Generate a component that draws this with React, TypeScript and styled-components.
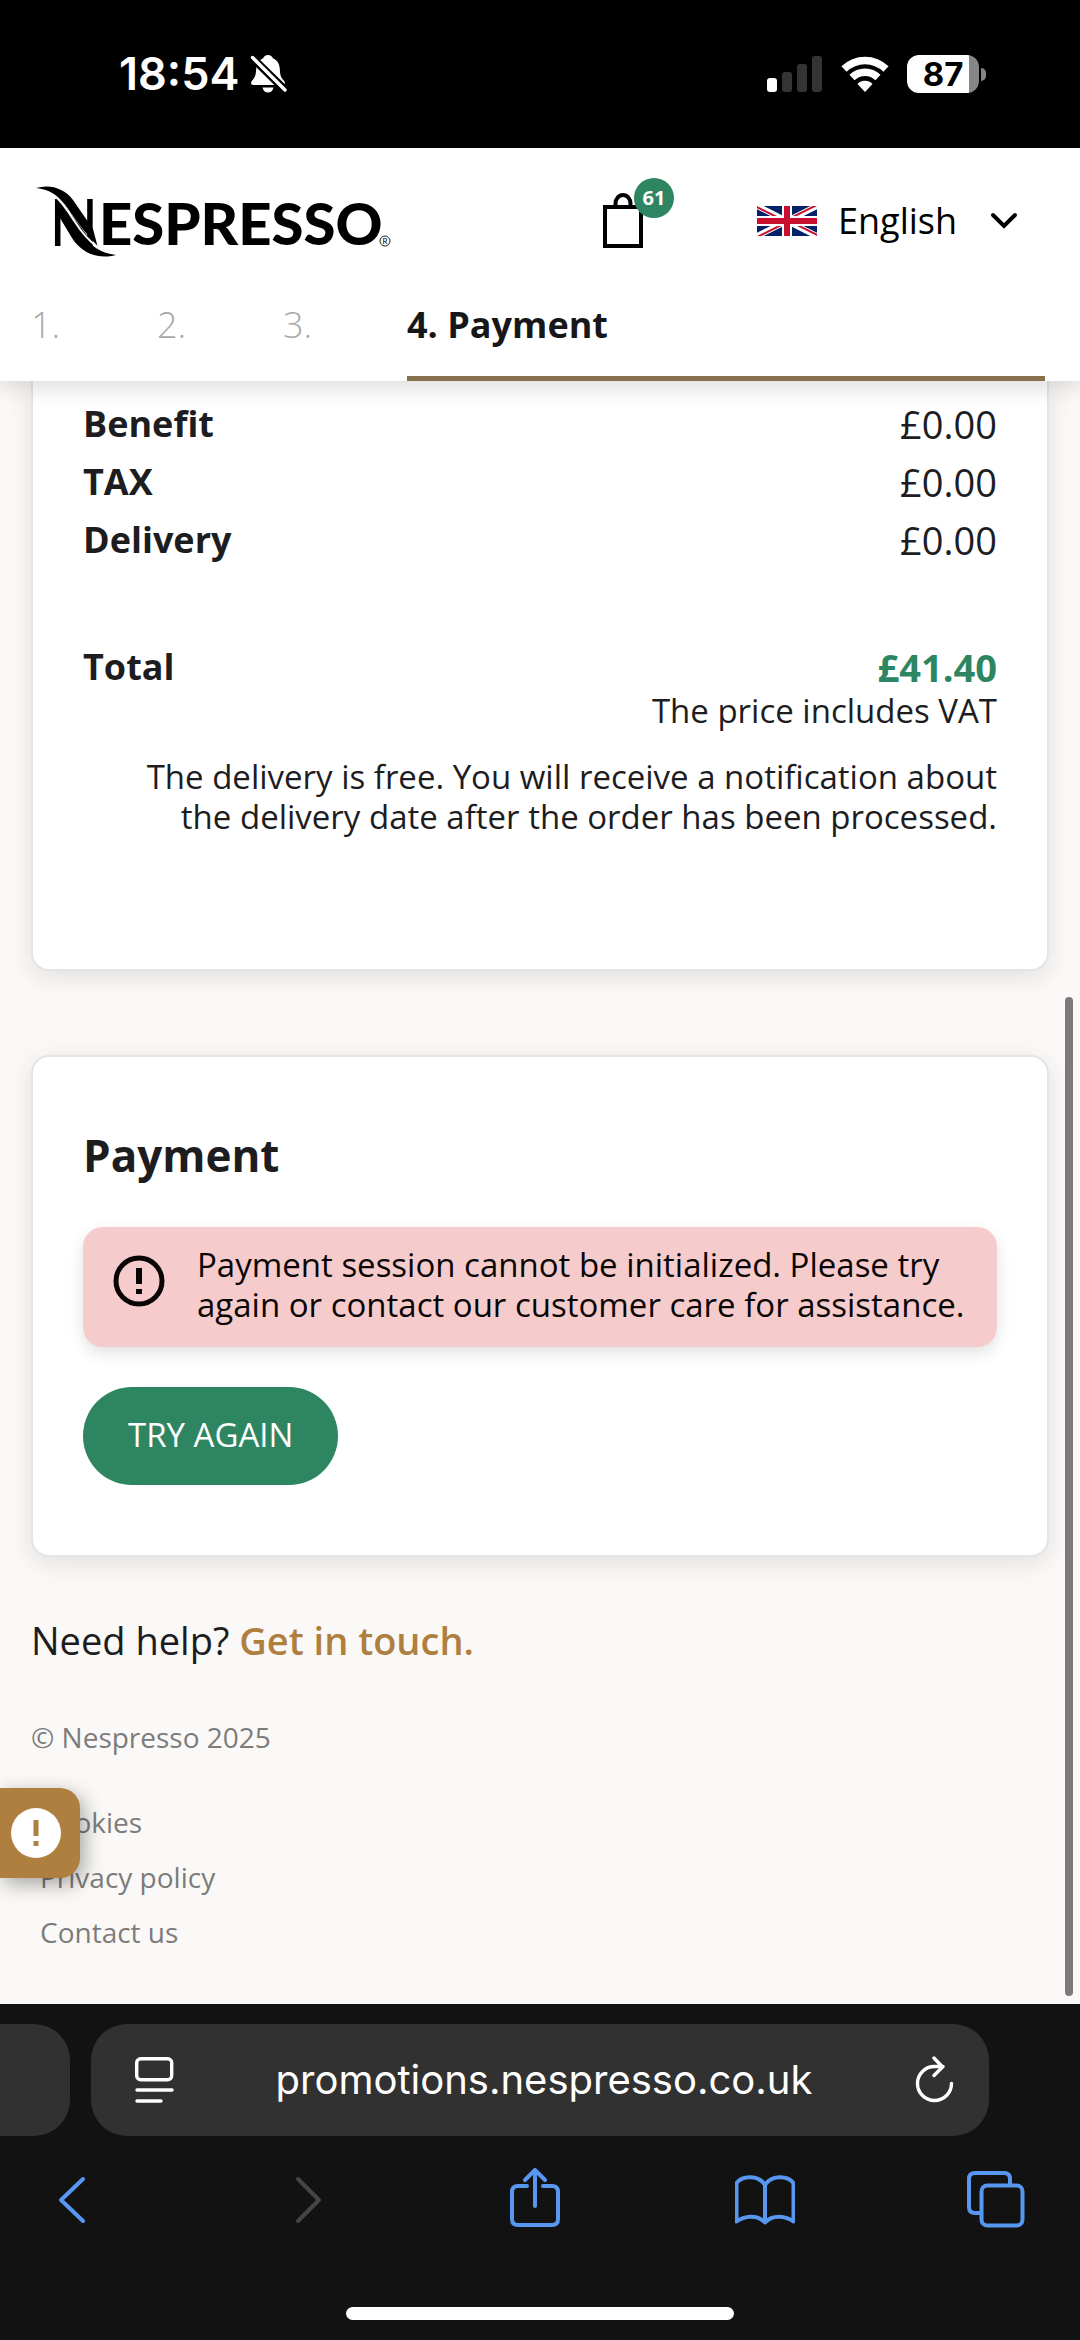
import React from 'react';
import styled, { createGlobalStyle } from 'styled-components';

const color = {
  ink: '#1d1d1f',
  green: '#2d8661',
  gold: '#af7f3f',
  sand: '#faf9f7',
  muted: '#7c7c7c',
  blue: '#5897f0',
};

const bodyFont = '"Open Sans", "Noto Sans", sans-serif';
const systemFont = 'Inter, Roboto, sans-serif';

const GlobalStyle = createGlobalStyle`
  * { box-sizing: border-box; }
  body { margin: 0; background: #121212; }
  p, h2, dl, dd, ul, ol { margin: 0; padding: 0; }
  ul, ol { list-style: none; }
  button, select { font: inherit; color: inherit; background: none; border: 0; padding: 0; margin: 0; }
  svg { display: block; flex: none; }
`;

const Screen = styled.div`
  display: flex;
  flex-direction: column;
  font-family: ${bodyFont};
  color: ${color.ink};
`;

/* ---------- phone status bar ---------- */

const StatusBar = styled.div`
  display: flex;
  align-items: center;
  justify-content: space-between;
  height: 148px;
  padding: 0 94px 0 119px;
  background: #000;
  color: #fff;
  font: 600 45px/60px ${systemFont};
`;

const StatusGroup = styled.div<{ $gap: number }>`
  display: flex;
  align-items: center;
  gap: ${p => p.$gap}px;
`;

const Battery = styled.div`
  display: flex;
  align-items: center;
  gap: 2px;
`;

const BatteryBody = styled.div`
  display: flex;
  align-items: center;
  justify-content: center;
  width: 72px;
  height: 38px;
  border-radius: 12px;
  background: linear-gradient(to right, #fff 62px, #868686 62px);
  color: #000;
  font: 700 33px/38px ${systemFont};
`;

const BatteryTip = styled.div`
  width: 5px;
  height: 13px;
  border-radius: 0 5px 5px 0;
  background: #868686;
`;

/* ---------- site header ---------- */

const Header = styled.header`
  position: relative;
  z-index: 1;
  background: #fff;
  box-shadow: 0 4px 24px rgba(0, 0, 0, 0.16);
`;

const HeaderRow = styled.div`
  display: flex;
  align-items: center;
  height: 146px;
  padding: 0 62px 0 30px;
`;

const Bag = styled.button`
  position: relative;
  margin-left: auto;
`;

const BagCount = styled.span`
  position: absolute;
  left: 34px;
  top: -14px;
  width: 40px;
  height: 40px;
  border-radius: 50%;
  background: ${color.green};
  color: #fff;
  font: 700 20px/40px ${bodyFont};
  text-align: center;
`;

const Language = styled.label`
  display: flex;
  align-items: center;
  margin-left: 111px;
  color: #000;
`;

const LanguageSelect = styled.select`
  appearance: none;
  margin: 0 32px 0 21px;
  font-size: 36px;
  line-height: 50px;
`;

const Steps = styled.ol`
  display: grid;
  grid-template-columns: 126px 126px 124px 1fr;
  padding: 0 35px 0 31px;
  font-size: 36px;
  line-height: 60px;
`;

const Step = styled.li<{ $active?: boolean }>`
  padding: 1px 0 21px;
  border-bottom: 5px solid ${p => (p.$active ? '#86704e' : 'transparent')};
  color: ${p => (p.$active ? '#17171a' : '#a9a9a9')};
  font-weight: ${p => (p.$active ? 700 : 300)};
`;

/* ---------- page body ---------- */

const Main = styled.main`
  position: relative;
  padding: 0 31px 44px;
  background: ${color.sand};
`;

const Card = styled.section<{ $continued?: boolean }>`
  padding: ${p => (p.$continued ? '14px 50px 132px' : '68px 50px 70px')};
  border: solid #e6e5e4;
  border-width: ${p => (p.$continued ? '0 2px 2px' : '2px')};
  border-radius: ${p => (p.$continued ? '0 0 18px 18px' : '18px')};
  background: #fff;
  box-shadow: 0 6px 26px rgba(0, 0, 0, 0.1);
  & + & { margin-top: 84px; }
`;

const PriceList = styled.dl`
  display: flex;
  flex-direction: column;
  font-size: 36px;
`;

const PriceRow = styled.div<{ $total?: boolean }>`
  display: flex;
  justify-content: space-between;
  margin-top: ${p => (p.$total ? '74px' : '0')};
  line-height: ${p => (p.$total ? '48px' : '58px')};
`;

const PriceLabel = styled.dt`
  font-weight: 700;
`;

const PriceValue = styled.dd<{ $total?: boolean }>`
  font-size: 38px;
  font-weight: ${p => (p.$total ? 700 : 400)};
  color: ${p => (p.$total ? color.green : 'inherit')};
`;

const PriceNote = styled.p`
  padding-left: 40px;
  font-size: 33px;
  line-height: 40px;
  text-align: right;
  & + & { margin-top: 26px; }
`;

const CardTitle = styled.h2`
  font-size: 44px;
  line-height: 60px;
`;

const Alert = styled.div`
  display: flex;
  gap: 32px;
  margin-top: 42px;
  padding: 18px 30px 22px;
  border-radius: 20px;
  background: #f5cbcc;
  color: #0a0505;
  font-size: 33px;
  line-height: 40px;
  box-shadow: 0 6px 16px rgba(0, 0, 0, 0.12);
  svg { margin-top: 10px; }
`;

const TryAgain = styled.button`
  height: 98px;
  margin-top: 40px;
  padding: 0 45px 4px;
  border-radius: 49px;
  background: ${color.green};
  color: #fff;
  font-size: 33px;
`;

const Help = styled.p`
  margin-top: 58px;
  font-size: 38px;
  line-height: 50px;
`;

const HelpLink = styled.a`
  color: ${color.gold};
  font-weight: 600;
  text-decoration: none;
`;

const Copyright = styled.p`
  margin-top: 52px;
  color: ${color.muted};
  font-size: 28px;
  line-height: 40px;
`;

const FooterLinks = styled.ul`
  margin: 38px 0 0 9px;
  font-size: 28px;
  line-height: 55px;
`;

const FooterLink = styled.a`
  color: ${color.muted};
  text-decoration: none;
`;

const NoticeTab = styled.button`
  position: absolute;
  left: 0;
  bottom: 126px;
  display: flex;
  align-items: center;
  width: 80px;
  height: 90px;
  padding-left: 11px;
  border-radius: 0 20px 20px 0;
  background: ${color.gold};
  box-shadow: 4px 6px 20px rgba(0, 0, 0, 0.35);
`;

const ScrollThumb = styled.div`
  position: absolute;
  right: 7px;
  bottom: 8px;
  width: 8px;
  height: 999px;
  border-radius: 4px;
  background: #7b7979;
`;

/* ---------- browser chrome ---------- */

const BrowserBar = styled.footer`
  display: flex;
  flex-direction: column;
  padding-top: 20px;
  background: #121212;
  color: #fff;
`;

const TabStrip = styled.div`
  display: grid;
  grid-template-columns: 70px 1fr;
  gap: 21px;
  padding-right: 91px;
`;

const NeighbourTab = styled.div`
  border-radius: 0 36px 36px 0;
  background: #313131;
`;

const AddressBar = styled.div`
  display: flex;
  align-items: center;
  justify-content: space-between;
  height: 112px;
  padding: 0 34px 0 42px;
  border-radius: 36px;
  background: #313131;
  font: 400 40px/56px ${systemFont};
`;

const Toolbar = styled.nav`
  display: flex;
  justify-content: space-between;
  padding: 32px 54px 0 42px;
`;

const ToolButton = styled.button<{ $off?: boolean }>`
  color: ${p => (p.$off ? '#454545' : color.blue)};
`;

const HomeIndicator = styled.div`
  width: 388px;
  height: 13px;
  margin: 73px auto 20px;
  border-radius: 7px;
  background: #fff;
`;

/* ---------- drawings ---------- */

const BellOff = () => (
  <svg width="37" height="40" viewBox="0 0 37 40">
    <path d="M18 1c-2.500 0-4.300 1.500-4.800 3.300C8.800 6 6.400 10 6.200 15c-.2 6-1.200 8.500-4 11.500C.3 28.700.8 31 3.500 31h29c2.700 0 3.200-2.300 1.300-4.500-2.800-3-3.800-5.500-4-11.500-.2-5-2.600-9-7-10.700C22.300 2.500 20.500 1 18 1z" fill="#fff" />
    <path d="M12.500 33.500h11c-.5 3-2.700 5-5.500 5s-5-2-5.500-5z" fill="#fff" />
    <path d="M1.500 3L35 36" stroke="#000" strokeWidth="8" />
    <path d="M2.500 3.500L35 36" stroke="#fff" strokeWidth="3.400" strokeLinecap="round" />
  </svg>
);

const Signal = () => (
  <svg width="56" height="36" viewBox="0 0 56 36">
    <rect x="0" y="22" width="10" height="14" rx="3" fill="#fff" />
    <g fill="#343434">
      <rect x="15" y="16" width="10" height="20" rx="3" />
      <rect x="30" y="8" width="10" height="28" rx="3" />
      <rect x="45" y="0" width="10" height="36" rx="3" />
    </g>
  </svg>
);

const Wifi = () => (
  <svg width="48" height="36" viewBox="0 0 48 36" fill="none" stroke="#fff" strokeWidth="7.500">
    <path d="M3 13C15 1.500 33 1.500 45 13" />
    <path d="M11 21.500C18.500 14.500 29.500 14.500 37 21.500" />
    <path d="M24 36l-7.500-8c4-4.300 11-4.300 15 0z" fill="#fff" stroke="none" />
  </svg>
);

const Logo = () => (
  <svg width="370" height="80" viewBox="0 0 370 80" role="img" aria-label="Nespresso" fontFamily="Lato, sans-serif">
    <text x="19" y="65" fontSize="65" fontWeight="400">N</text>
    <text x="69" y="64" fontSize="58" fontWeight="900">ESPRESSO</text>
    <path d="M26 18C34 25 40 34 47 45 56 59 64 71 86 74 66 79 51 71 42 57L30 37z" />
    <path d="M6 7C20 3 34 7 43 19L63 48 67.500 65C58 55 50 45 43 35 33 20 25 9 6 7z" />
    <path d="M25.500 15.500C33 22 38 30 45 41c7 11 14 19 23 25.500" fill="none" stroke="#fff" strokeWidth="2" />
    <circle cx="355" cy="60" r="5" fill="none" stroke="#222" strokeWidth="1" />
    <text x="355" y="63" fontSize="8" textAnchor="middle">R</text>
  </svg>
);

const BagIcon = () => (
  <svg width="46" height="58" viewBox="0 0 46 58" fill="none" stroke="#000" strokeWidth="4">
    <rect x="5" y="15" width="36" height="39" />
    <path d="M15.500 15v-3.500a7.500 8.500 0 0 1 15 0V15" />
  </svg>
);

const Flag = () => (
  <svg width="60" height="30" viewBox="0 0 60 30">
    <clipPath id="flagDiagonals">
      <path d="M30 15h30v15zv15H0zH0V0zV0h30z" />
    </clipPath>
    <rect width="60" height="30" fill="#012169" />
    <path d="M0 0l60 30M60 0L0 30" stroke="#fff" strokeWidth="6" />
    <path d="M0 0l60 30M60 0L0 30" stroke="#c8102e" strokeWidth="4" clipPath="url(#flagDiagonals)" />
    <path d="M30 0v30M0 15h60" stroke="#fff" strokeWidth="10" />
    <path d="M30 0v30M0 15h60" stroke="#c8102e" strokeWidth="6" />
  </svg>
);

const ChevronDown = () => (
  <svg width="28" height="18" viewBox="0 0 28 18" fill="none" stroke="#000" strokeWidth="4" strokeLinecap="round">
    <path d="M3 3l11 11L25 3" />
  </svg>
);

const AlertIcon = () => (
  <svg width="52" height="52" viewBox="0 0 52 52">
    <circle cx="26" cy="26" r="23" fill="none" stroke="#0a0505" strokeWidth="5" />
    <path d="M26 13v16M26 34v5" stroke="#0a0505" strokeWidth="6" />
  </svg>
);

const NoticeIcon = () => (
  <svg width="50" height="50" viewBox="0 0 50 50">
    <circle cx="25" cy="25" r="25" fill="#fff" />
    <path d="M25 12v16M25 33v5" stroke={color.gold} strokeWidth="5" />
  </svg>
);

const ReaderIcon = () => (
  <svg width="42" height="48" viewBox="0 0 42 48" fill="none" stroke="#fff" strokeWidth="3.400" strokeLinecap="round">
    <rect x="3.700" y="2.700" width="35" height="21" rx="4" />
    <path d="M4 34h35M4 45h24" />
  </svg>
);

const ReloadIcon = () => (
  <svg width="42" height="48" viewBox="0 0 42 48" fill="none" stroke="#fff" strokeWidth="3.400" strokeLinecap="round" strokeLinejoin="round">
    <path d="M38.500 27.500A17 17 0 1 1 21.500 10.500H30" />
    <path d="M21 2l8.500 9-8.500 8.500" />
  </svg>
);

const toolPaths: Record<string, React.ReactNode> = {
  Back: <path d="M41 11L19 32l22 21" />,
  Forward: <path d="M25 11l21 21-21 21" />,
  Share: (
    <>
      <path d="M23 18H14q-6 0-6 6v27q0 6 6 6h34q6 0 6-6V24q0-6-6-6h-9" />
      <path d="M31 38V3M21 12L31 2l10 10" />
    </>
  ),
  Bookmarks: (
    <>
      <path d="M30 17C24 7 8 7 1.500 15v38.500C9 48 22 46 30 54.500 38 46 51 48 58.500 53.500V15C52 7 36 7 30 17z" />
      <path d="M30 17v37" />
    </>
  ),
  Tabs: (
    <>
      <rect x="15.500" y="17.500" width="41" height="40" rx="6" />
      <path d="M15 45H9q-6 0-6-6V11q0-6 6-6h29q6 0 6 6v6" />
    </>
  ),
};

const prices = [
  ['Benefit', '£0.00'],
  ['TAX', '£0.00'],
  ['Delivery', '£0.00'],
];

export default function App() {
  return (
    <Screen>
      <GlobalStyle />

      <StatusBar>
        <StatusGroup $gap={11}>
          <span>18:54</span>
          <BellOff />
        </StatusGroup>
        <StatusGroup $gap={18}>
          <Signal />
          <Wifi />
          <Battery>
            <BatteryBody>87</BatteryBody>
            <BatteryTip />
          </Battery>
        </StatusGroup>
      </StatusBar>

      <Header>
        <HeaderRow>
          <Logo />
          <Bag aria-label="Shopping bag">
            <BagIcon />
            <BagCount>61</BagCount>
          </Bag>
          <Language>
            <Flag />
            <LanguageSelect aria-label="Language" defaultValue="en">
              <option value="en">English</option>
            </LanguageSelect>
            <ChevronDown />
          </Language>
        </HeaderRow>
        <Steps>
          <Step>1.</Step>
          <Step>2.</Step>
          <Step>3.</Step>
          <Step $active aria-current="step">4. Payment</Step>
        </Steps>
      </Header>

      <Main>
        <Card $continued>
          <PriceList>
            {prices.map(([label, value]) => (
              <PriceRow key={label}>
                <PriceLabel>{label}</PriceLabel>
                <PriceValue>{value}</PriceValue>
              </PriceRow>
            ))}
            <PriceRow $total>
              <PriceLabel>Total</PriceLabel>
              <PriceValue $total>£41.40</PriceValue>
            </PriceRow>
          </PriceList>
          <PriceNote>The price includes VAT</PriceNote>
          <PriceNote>
            The delivery is free. You will receive a notification about the delivery date after the order has been processed.
          </PriceNote>
        </Card>

        <Card>
          <CardTitle>Payment</CardTitle>
          <Alert role="alert">
            <AlertIcon />
            <p>Payment session cannot be initialized. Please try again or contact our customer care for assistance.</p>
          </Alert>
          <TryAgain>TRY AGAIN</TryAgain>
        </Card>

        <Help>
          Need help? <HelpLink href="#contact">Get in touch.</HelpLink>
        </Help>
        <Copyright>© Nespresso 2025</Copyright>
        <FooterLinks>
          <li><FooterLink href="#cookies">Cookies</FooterLink></li>
          <li><FooterLink href="#privacy">Privacy policy</FooterLink></li>
          <li><FooterLink href="#contact">Contact us</FooterLink></li>
        </FooterLinks>

        <NoticeTab aria-label="Notice">
          <NoticeIcon />
        </NoticeTab>
        <ScrollThumb />
      </Main>

      <BrowserBar>
        <TabStrip>
          <NeighbourTab />
          <AddressBar>
            <ReaderIcon />
            <span>promotions.nespresso.co.uk</span>
            <button aria-label="Reload"><ReloadIcon /></button>
          </AddressBar>
        </TabStrip>
        <Toolbar>
          {Object.entries(toolPaths).map(([name, drawing]) => (
            <ToolButton key={name} aria-label={name} $off={name === 'Forward'} disabled={name === 'Forward'}>
              <svg width="60" height="66" viewBox="0 0 60 66" fill="none" stroke="currentColor" strokeWidth="4" strokeLinecap="round" strokeLinejoin="round">
                {drawing}
              </svg>
            </ToolButton>
          ))}
        </Toolbar>
        <HomeIndicator />
      </BrowserBar>
    </Screen>
  );
}
